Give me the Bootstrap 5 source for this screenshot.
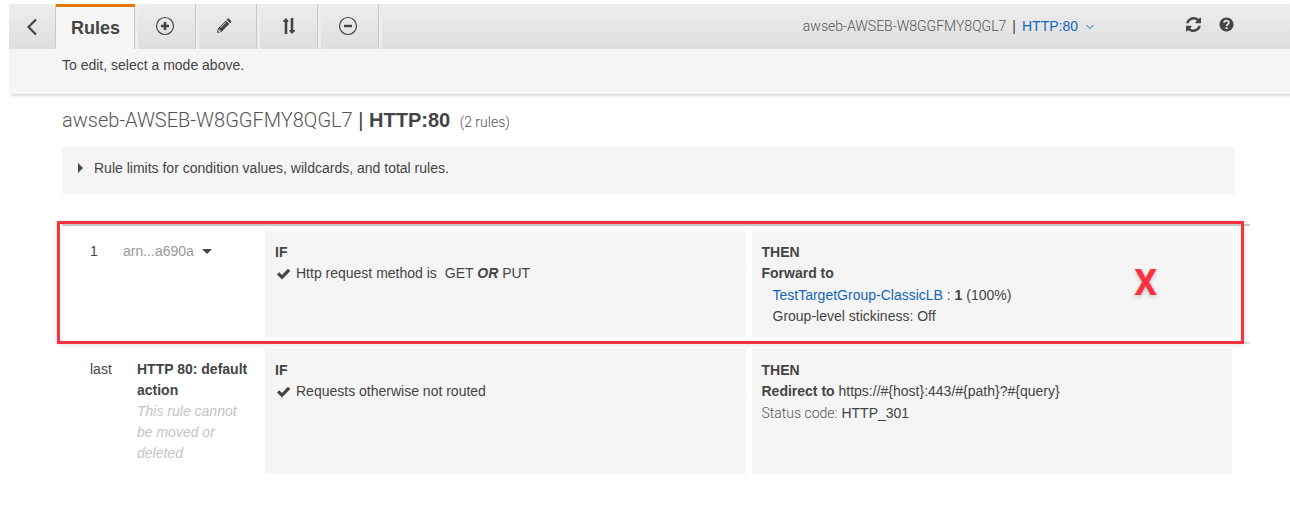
<!DOCTYPE html>
<html lang="en">
<head>
<meta charset="utf-8">
<meta name="viewport" content="width=device-width, initial-scale=1">
<title>Load balancer listener rules</title>
<link href="https://cdn.jsdelivr.net/npm/bootstrap@5.3.0/dist/css/bootstrap.min.css" rel="stylesheet">
<style>
  body { font-family: "Liberation Sans", Arial, sans-serif; font-size: 14px; line-height: 21px; color: #444; }
  a { color: #1166bb; text-decoration: none; }
  .thin { font-family: Roboto, "Liberation Sans", sans-serif; font-weight: 300; color: #555; }

  .rules-header { margin: 4px 0 0 9px; background: #f5f5f5; box-shadow: 2px 2px 2px rgba(0, 0, 0, .14); }
  .mode-bar { height: 45px; background: linear-gradient(#ededed, #dedede); }
  .mode-btn { width: 61px; padding: 0 5px 2px 0; border: 0; border-right: 3px solid #ededed; border-radius: 0; background: none; color: #444; box-shadow: inset -1px 0 #c8c8c8; }
  .mode-back { width: 47px; border-right: 0; padding: 0 2px 0 0; }
  .mode-current { width: 82px; padding: 3px 0 0; background: #f5f5f5; font-size: 18px; font-weight: 700; box-shadow: inset 0 3px #e47900, inset -1px 0 #c8c8c8; }
  .icon-btn { padding: 0; border: 0; background: none; color: #444; }
  .listener-pick { margin-right: 92px; }
  .listener-path { gap: 6px; }
  .header-tools { gap: 18px; margin-right: 56px; padding-bottom: 4px; }
  .mode-hint { padding: 6px 53px 18px; }

  .rules-main { padding: 13px 40px 46px 62px; }
  .rules-title { font-size: 20px; line-height: 26px; }
  .rule-count { font-size: 14px; margin-left: 4px; }
  .limits { margin: 12px 15px 30px 0; padding: 11px 16px 15px; background: #f5f5f5; }
  .limits summary { list-style: none; }

  .rule-row { display: grid; grid-template-columns: 197px 1fr 1fr; gap: 6px; padding: 5px 18px 5px 0; border-top: 2px solid #ccc; }
  .default-row { border-top-color: #ddd; }
  .rule-cell { padding: 11px 10px 10px; background: #f5f5f5; }
  .rule-id { padding: 10px 0 10px 28px; }
  .rule-pos { width: 33px; }
  .rule-pos-last { width: 47px; }
  .rule-name { width: 114px; }
  .rule-arn { color: #999; }
  .rule-note { color: #c4c4c4; font-style: italic; }
  .detail { margin-top: 1px; }
  .detail-list { padding-left: 11px; }
  .callout-box { top: -5px; right: 6px; bottom: -2px; left: -5px; border: 3px solid #fb3140; box-shadow: 0 1px 6px rgba(0, 0, 0, .12), inset 0 1px 6px rgba(0, 0, 0, .06); pointer-events: none; }
  .callout-x { top: 37px; right: 93px; font-family: Roboto, sans-serif; font-size: 36px; line-height: 40px; font-weight: 700; color: #fb3140; text-shadow: 0 2px 4px rgba(0, 0, 0, .2); }
</style>
</head>
<body>
<header class="rules-header">
  <div class="mode-bar d-flex">
    <button type="button" class="mode-btn mode-back d-flex align-items-center justify-content-center" aria-label="Back">
      <svg width="12" height="18" viewBox="0 0 12 18" fill="none" stroke="currentColor" stroke-width="2.200"><path d="M10 1.500 2.500 9l7.500 7.500"/></svg>
    </button>
    <button type="button" class="mode-btn mode-current">Rules</button>
    <button type="button" class="mode-btn d-flex align-items-center justify-content-center" aria-label="Add rules">
      <svg width="20" height="20" viewBox="0 0 20 20" fill="none" stroke="currentColor"><circle cx="10" cy="10" r="8.500" stroke-width="1.200"/><path d="M10 6v8M6 10h8" stroke-width="2.600"/></svg>
    </button>
    <button type="button" class="mode-btn d-flex align-items-center justify-content-center" aria-label="Edit rules">
      <svg class="me-1" width="16" height="16" viewBox="0 0 16 16" fill="currentColor" fill-rule="evenodd"><path d="m10.600 1.800 1-1c.4-.4 1-.4 1.400 0l2 2c.4.4.4 1 0 1.400l-1 1zM9.900 2.500l3.400 3.400-8.100 8.100L1 15l.9-4.400zM2.800 11.600l-.5 2 .5.500 2-.5v-1h-1v-1zM9.600 4.100l-5.500 5.500.4.400L10 4.500z"/></svg>
    </button>
    <button type="button" class="mode-btn d-flex align-items-center justify-content-center" aria-label="Reorder rules">
      <svg class="ms-1" width="14" height="18" viewBox="0 0 14 18" fill="currentColor"><path d="M4 1 1 4v1h1.700v12h2.600V5h1V3.500zM10 17l3-3v-1h-1.700V1H8.700v12H7.500v1.200z"/></svg>
    </button>
    <button type="button" class="mode-btn d-flex align-items-center justify-content-center" aria-label="Delete rules">
      <svg width="20" height="20" viewBox="0 0 20 20" fill="none" stroke="currentColor"><circle cx="10" cy="10" r="8.500" stroke-width="1.200"/><path d="M6 10h8" stroke-width="2.400"/></svg>
    </button>
    <div class="listener-pick ms-auto d-flex align-items-center gap-2">
      <span class="listener-path d-flex"><span class="thin">awseb-AWSEB-W8GGFMY8QGL7</span><span>|</span><a href="#listener">HTTP:80</a></span>
      <svg width="8" height="6" viewBox="0 0 8 6" fill="none" stroke="#1166bb"><path d="m.5 1 3.500 3.500L7.500 1"/></svg>
    </div>
    <div class="header-tools d-flex align-items-center">
      <button type="button" class="icon-btn d-flex" aria-label="Refresh">
        <svg width="15" height="15" viewBox="0 0 1536 1536" fill="currentColor"><path d="M1511 928q0 5-1 7-64 268-268 434.500T764 1536q-146 0-282.500-55T238 1324l-129 129q-19 19-45 19t-45-19-19-45V960q0-26 19-45t45-19h448q26 0 45 19t19 45-19 45l-137 137q71 66 161 102t187 36q134 0 250-65t186-179q11-17 53-117 8-23 30-23h192q13 0 22.500 9.500t9.500 22.500zM1536 128v448q0 26-19 45t-45 19h-448q-26 0-45-19t-19-45 19-45l138-138Q969 256 768 256q-134 0-250 65T332 500q-11 17-53 117-8 23-30 23H50q-13 0-22.500-9.500T18 608v-7q65-268 270-434.500T768 0q146 0 284 55.500T1297 212l130-129q19-19 45-19t45 19 19 45z"/></svg>
      </button>
      <button type="button" class="icon-btn d-flex" aria-label="Help">
        <svg width="15" height="15" viewBox="0 0 16 16"><circle cx="8" cy="8" r="7.500" fill="currentColor"/><path d="M5.500 6.200C5.600 3 10.500 3.200 10.400 6c0 1.800-2.300 1.900-2.300 3.600" fill="none" stroke="#e8e8e8" stroke-width="2"/><path d="M7 10.800h2.200v2H7z" fill="#e8e8e8"/></svg>
      </button>
    </div>
  </div>
  <div class="mode-hint">To edit, select a mode above.</div>
</header>

<main class="rules-main">
  <h1 class="rules-title m-0 fw-normal"><span class="thin">awseb-AWSEB-W8GGFMY8QGL7</span> | <strong>HTTP:80</strong> <span class="rule-count thin">(2 rules)</span></h1>

  <details class="limits">
    <summary><svg class="me-2" width="8" height="12" viewBox="0 0 8 12" fill="currentColor"><path d="M0 0l5 5-5 5z"/></svg>Rule limits for condition values, wildcards, and total rules.</summary>
  </details>

  <section class="rule-row position-relative">
    <div class="rule-id d-flex">
      <div class="rule-pos">1</div>
      <div class="d-flex align-items-start"><span class="rule-arn">arn...a690a</span>
        <button type="button" class="icon-btn ms-2 py-2" aria-label="Show rule ARN"><svg class="d-block" width="10" height="5" viewBox="0 0 10 5" fill="currentColor"><path d="M0 0h10L5 5z"/></svg></button>
      </div>
    </div>
    <div class="rule-cell">
      <div class="fw-bold">IF</div>
      <div class="d-flex align-items-center gap-1"><svg width="17" height="14" viewBox="0 0 17 14" fill="currentColor"><path d="M2 7.500 4.200 5.300 7 8.100 13 1.700l2.300 2.200L7 12.500z"/></svg><span>Http request method is</span><span class="ms-1">GET <strong><em>OR</em></strong> PUT</span></div>
    </div>
    <div class="rule-cell">
      <div class="fw-bold">THEN</div>
      <div class="fw-bold">Forward to</div>
      <div class="detail detail-list"><a href="#target">TestTargetGroup-ClassicLB</a> : <strong>1</strong> (100%)</div>
      <div class="detail-list">Group-level stickiness: Off</div>
    </div>
    <div class="callout-box position-absolute"></div>
    <div class="callout-x position-absolute">X</div>
  </section>

  <section class="rule-row default-row">
    <div class="rule-id d-flex">
      <div class="rule-pos-last flex-shrink-0">last</div>
      <div class="rule-name"><strong>HTTP 80: default action</strong>
        <div class="rule-note">This rule cannot <br>be moved or deleted</div>
      </div>
    </div>
    <div class="rule-cell">
      <div class="fw-bold">IF</div>
      <div class="d-flex align-items-center gap-1"><svg width="17" height="14" viewBox="0 0 17 14" fill="currentColor"><path d="M2 7.500 4.200 5.300 7 8.100 13 1.700l2.300 2.200L7 12.500z"/></svg><span>Requests otherwise not routed</span></div>
    </div>
    <div class="rule-cell">
      <div class="fw-bold">THEN</div>
      <div><strong>Redirect to</strong> https://#{host}:443/#{path}?#{query}</div>
      <div class="detail"><span class="thin">Status code:</span> HTTP_301</div>
    </div>
  </section>
</main>
<script src="https://cdn.jsdelivr.net/npm/bootstrap@5.3.0/dist/js/bootstrap.bundle.min.js"></script>
</body>
</html>
